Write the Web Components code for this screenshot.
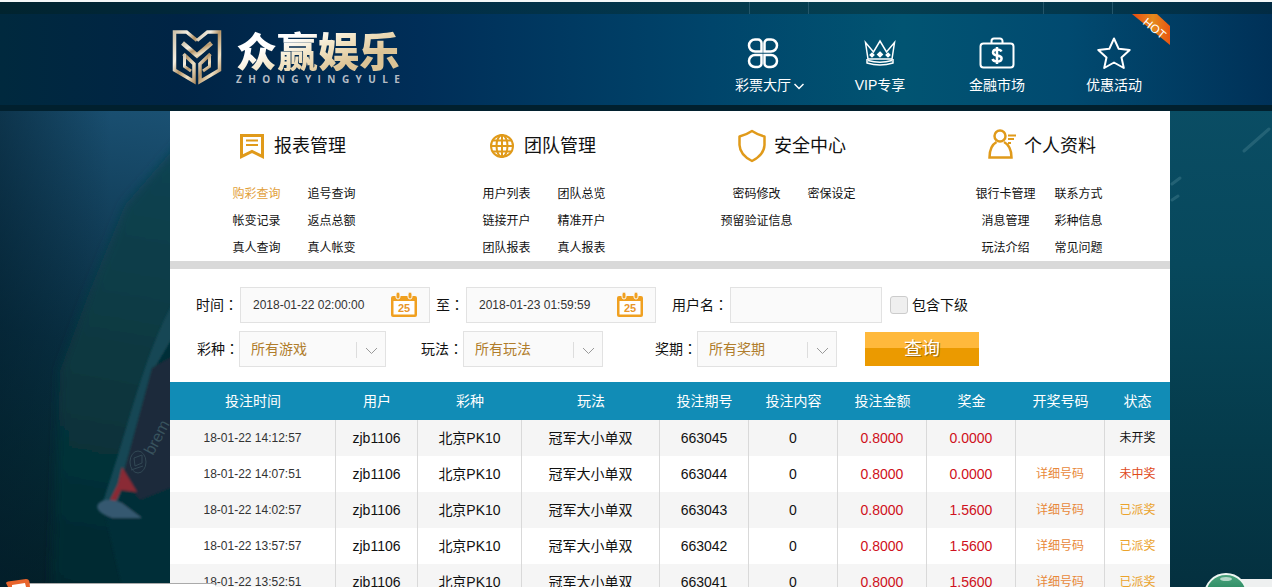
<!DOCTYPE html>
<html lang="zh-CN">
<head>
<meta charset="utf-8">
<meta name="viewport" content="width=device-width, initial-scale=1">
<title>众赢娱乐 - 购彩查询</title>
<style>
  html, body { margin: 0; height: 100%; }
  body {
    overflow: hidden;
    background: #04303d;
    color: #111;
    font: 14px/20px "Liberation Sans", "Noto Sans CJK SC", sans-serif;
  }
</style>
</head>
<body>
<lottery-app></lottery-app>

<script>
const define = (name, html, setup) => {
  const template = document.createElement('template');
  template.innerHTML = html;
  customElements.define(name, class extends HTMLElement {
    constructor() {
      super();
      this.attachShadow({ mode: 'open' }).append(template.content.cloneNode(true));
    }
    connectedCallback() { if (setup) setup(this, this.shadowRoot); }
  });
};

/* Stadium photograph behind the page, redrawn as vector shapes */
define('page-backdrop', `
<style>
  :host { position: absolute; inset: 0; overflow: hidden; display: flex; justify-content: space-between;
          background: #04303d; }
  svg { display: block; flex: none; }
  .right { flex: 1; }
</style>
<svg width="300" height="587" viewBox="0 0 300 587" aria-hidden="true">
  <defs>
    <linearGradient id="base" gradientUnits="userSpaceOnUse" x1="150" y1="110" x2="50" y2="587">
      <stop offset="0" stop-color="#1a5072"/><stop offset=".25" stop-color="#123f5a"/>
      <stop offset=".5" stop-color="#093043"/><stop offset=".75" stop-color="#052a34"/><stop offset="1" stop-color="#042028"/>
    </linearGradient>
    <linearGradient id="shade" gradientUnits="userSpaceOnUse" x1="0" y1="0" x2="110" y2="0">
      <stop offset="0" stop-color="#021d2c" stop-opacity=".5"/><stop offset="1" stop-color="#021d2c" stop-opacity="0"/>
    </linearGradient>
    <linearGradient id="cloth" gradientUnits="userSpaceOnUse" x1="160" y1="130" x2="80" y2="587">
      <stop offset="0" stop-color="#0b4454"/><stop offset=".5" stop-color="#083840"/><stop offset="1" stop-color="#04282f"/>
    </linearGradient>
    <filter id="soft"><feGaussianBlur stdDeviation="5"/></filter>
    <filter id="edge"><feGaussianBlur stdDeviation="1"/></filter>
  </defs>
  <rect width="300" height="587" fill="url(#base)"/>
  <rect width="300" height="587" fill="url(#shade)"/>
  <path d="M190 130 L125 205 L90 290 L60 370 L50 620 L200 620Z" fill="url(#cloth)" filter="url(#soft)"/>
  <g filter="url(#edge)">
    <path d="M180 320 L160 345 L112 480 L104 510 L130 620 H190Z" fill="#062e38"/>
    <path d="M180 290 C150 340 135 400 118 455 L102 505 L117 505 L138 430 L152 372 L180 325Z" fill="#134754"/>
    <path d="M180 352 L152 368 Q138 420 122 478 L140 500 L180 484Z" fill="#1b2b3a"/>
    <path d="M122 467 L137 492 L121 490 L113 507 L110 500 L118 484Z" fill="#8a2935"/>
    <path d="M98 504 Q105 496 122 503 L142 518 H112 Q94 512 98 504Z" fill="#35586f"/>
  </g>
  <g fill="none" stroke="#3c5660" stroke-width="1" opacity=".7">
    <ellipse cx="138" cy="462" rx="8" ry="11"/><path d="M134 458l8-3v8l-7 3zM131 470l12-4"/>
  </g>
  <g fill="#38525d" font-family="Liberation Sans" font-size="16" transform="translate(153 456) rotate(-62)"><text>brem</text></g>
</svg>
<div class="right"></div>
<svg style="background:linear-gradient(#0a4d64 18%, #07485c 45%, #053b4b 75%, #04303f)" width="180" height="587" viewBox="0 0 180 587" aria-hidden="true">
  <g stroke="#4a8493" stroke-width="3" opacity=".4" stroke-linecap="round"><path d="M152 151l25-22M80 184l8-6M80 200l6-4"/></g>
</svg>`);

define('brand-logo', `
<style>
  :host { display: block; }
  a { display: flex; gap: 14px; text-decoration: none; }
  svg { flex: none; }
  .words { display: flex; flex-direction: column; gap: 2px; width: 164px; }
  .name { font: 900 41px/44px "Noto Sans CJK SC", sans-serif; color: transparent; white-space: nowrap;
    background: linear-gradient(160deg, #fff 30%, #f3e6c8 50%, #dcc496 75%); -webkit-background-clip: text; background-clip: text; }
  .latin { display: flex; justify-content: space-between; color: #b5bcc4; font: 700 10px/12px "Open Sans", sans-serif; }
</style>
<a href="#home">
  <svg width="50" height="60" viewBox="0 0 50 60" aria-hidden="true">
    <defs><linearGradient id="g" x1="0" y1="0" x2="1" y2="1">
      <stop offset="0" stop-color="#cfc3ac"/><stop offset=".3" stop-color="#f5efe2"/><stop offset=".5" stop-color="#b59467"/><stop offset=".75" stop-color="#efe2c6"/><stop offset="1" stop-color="#a88355"/>
    </linearGradient></defs>
    <g fill="none" stroke="url(#g)" stroke-width="3.500">
      <path d="M25 13.500 L14.500 5 H2.500 V43 L22 54.500 V37 L11.500 27"/>
      <path d="M25 13.500 L35.500 5 H47.500 V43 L28 54.500 V37 L38.500 27"/>
      <path d="M10.500 16 L25 28.500 L39.500 16" stroke-width="4.500"/>
      <path d="M12.500 27 V39.500 L19 44 M37.500 27 V39.500 L31 44" stroke-width="3"/>
    </g>
  </svg>
  <span class="words"><span class="name">众赢娱乐</span><span class="latin"></span></span>
</a>`, (host, root) => {
  const latin = root.querySelector('.latin');
  if (!latin.childElementCount) for (const letter of 'ZHONGYINGYULE') {
    const span = document.createElement('span');
    span.textContent = letter;
    latin.append(span);
  }
});

define('nav-item', `
<style>
  :host { display: block; flex: 1; }
  a { display: flex; flex-direction: column; align-items: center; gap: 4px; color: #fff; text-decoration: none; }
  .icon { display: grid; place-items: center; height: 36px; }
  .label { position: relative; white-space: nowrap; }
</style>
<a href="#"><span class="icon"><slot name="icon"></slot></span><span class="label"><slot></slot></span></a>`,
(host, root) => { root.querySelector('a').href = host.getAttribute('href'); });

define('site-header', `
<style>
  :host { display: block; border-top: 2px solid #f4f8f8; position: relative; }
  .strip { display: flex; height: 12px; padding-right: 103px; justify-content: flex-end;
    background: linear-gradient(90deg, #01242f, #012a42 25%, #023349 45%, #053f50 68%, #03374c 85%, #022b43); }
  .strip i { box-sizing: border-box; border-left: 1px solid #24566a; }
  .main { box-sizing: border-box; height: 91px; padding: 13px 103px 0 172px; display: flex; justify-content: space-between;
    background: linear-gradient(90deg, #00293e, #002445 14%, #002e58 33%, #00456b 56%, #015472 71%, #014a70 84%, #003158); }
  .edge { height: 6px; background: #01202e; }
  nav { display: flex; gap: 7px; width: 461px; padding-top: 8px; }
  svg { display: block; fill: none; stroke: #fff; stroke-width: 2; }
  .arrow { position: absolute; left: calc(100% + 3px); top: 8px; stroke-width: 1.500; }
  .hot { position: absolute; top: 12px; right: 102px; width: 38px; height: 32px; stroke: none; }
</style>
<div class="strip"><i style="width:59px"></i><i style="width:235px"></i><i style="width:69px"></i><i style="width:57px"></i></div>
<div class="main">
  <brand-logo></brand-logo>
  <nav aria-label="主导航">
    <nav-item href="#hall">
      <svg slot="icon" width="32" height="32" viewBox="0 0 32 32" style="stroke-width:2.500"><path d="M8 2.500h3a3.500 3.500 0 0 1 3.500 3.500v8.500H8a6 6 0 0 1 0-12zM24 2.500h-3a3.500 3.500 0 0 0-3.500 3.500v8.500H24a6 6 0 0 0 0-12zM8 30h3a3.500 3.500 0 0 0 3.500-3.500V18H8a6 6 0 0 0 0 12zM24 30h-3a3.500 3.500 0 0 1-3.500-3.500V18H24a6 6 0 0 1 0 12z"/></svg>
      彩票大厅<svg class="arrow" width="10" height="7" viewBox="0 0 10 7" aria-hidden="true"><path d="M.5 1 5 5.500 9.500 1"/></svg>
    </nav-item>
    <nav-item href="#vip">
      <svg slot="icon" width="32" height="28" viewBox="0 0 32 28" style="stroke-width:1.500"><path d="M1.500 3.500 4 20H28L30.500 3.500 22.500 13 16 2 9.500 13zM3 20v4q13 4 26 0v-4M4 21.500q12 3.500 24 0"/><g stroke-width="1.200"><path d="M8 14l2 2-2 2-2-2zM16 13l2.500 2.500L16 18l-2.500-2.500zM24 14l2 2-2 2-2-2z" fill="#fff"/></g></svg>
      VIP专享
    </nav-item>
    <nav-item href="#finance">
      <svg slot="icon" width="36" height="32" viewBox="0 0 36 32"><rect x="1.500" y="6.500" width="33" height="24" rx="3"/><path d="M12.500 6V4a2.500 2.500 0 0 1 2.500-2.500h6A2.500 2.500 0 0 1 23.500 4v2"/><path d="M22.500 14.500q-1-2-4.500-2-4 0-4 3 0 2.500 4.300 3t4.300 3q0 3-4.600 3-3.500 0-4.500-2.500M18 10v17" stroke-width="2.500"/></svg>
      金融市场
    </nav-item>
    <nav-item href="#promo">
      <svg slot="icon" width="34" height="32" viewBox="0 0 34 32"><path stroke-linejoin="round" d="M17 1.500l4.700 10.300 11 1.200-8.200 7.500 2.300 10.500L17 25.500 7.200 31l2.300-10.500L1.300 13l11-1.200z"/></svg>
      优惠活动
    </nav-item>
  </nav>
</div>
<div class="edge"></div>
<svg class="hot" viewBox="0 0 38 32" role="img" aria-label="HOT">
  <defs><linearGradient id="h"><stop offset="0" stop-color="#ea4a10"/><stop offset=".55" stop-color="#e58a1c"/><stop offset="1" stop-color="#ea5512"/></linearGradient></defs>
  <path d="M0 0H25L38 12V31Z" fill="url(#h)"/>
  <text x="11" y="9" transform="rotate(40 10 8)" fill="#fff" font-family="Liberation Sans" font-size="12">HOT</text>
</svg>`);

define('menu-group', `
<style>
  :host { display: block; --cell: 75px; }
  h2 { display: grid; grid-template-columns: 36px auto; width: 108px; height: 36px; margin: 0; padding-left: 68px;
       align-items: center; font-weight: 400; font-size: 18px; line-height: 24px; color: #111; white-space: nowrap; }
  .icon { display: grid; width: 28px; place-items: center; }
  ul { display: grid; grid-template-columns: var(--cell) var(--cell); margin: 0; padding: 17px 0 0 49px; list-style: none; }
  li { display: flex; justify-content: center; height: 27px; line-height: 27px; font-size: 12px; white-space: nowrap; }
  a { color: #111; text-decoration: none; }
  a[aria-current] { color: #e2a03a; }
</style>
<h2><span class="icon"><slot name="icon"></slot></span><span class="title"></span></h2><ul></ul>`,
(host, root) => {
  root.querySelector('.title').textContent = host.getAttribute('heading');
  const list = root.querySelector('ul');
  list.replaceChildren(...host.getAttribute('links').split(' ').map(text => {
    const li = document.createElement('li'), a = document.createElement('a');
    a.href = '#' + text;
    a.textContent = text;
    if (text === host.getAttribute('current')) a.setAttribute('aria-current', 'page');
    li.append(a);
    return li;
  }));
});

define('account-menu', `
<style>
  :host { display: grid; grid-template-columns: repeat(4, 1fr); box-sizing: border-box; height: 158px; padding-top: 17px;
          border-bottom: 8px solid #d9d9d9; }
  svg { display: block; fill: none; stroke: #e09a1a; stroke-width: 2.500; }
  .narrow { --cell: 73px; }
</style>
<menu-group heading="报表管理" current="购彩查询" links="购彩查询 追号查询 帐变记录 返点总额 真人查询 真人帐变">
  <svg slot="icon" width="24" height="26" viewBox="0 0 24 26"><path stroke-width="3" d="M1.500 2.500h21V23.500L12 18.500 1.500 23.500z"/><path d="M6 7.500h12M6 12h12" stroke-width="2"/></svg>
</menu-group>
<menu-group heading="团队管理" links="用户列表 团队总览 链接开户 精准开户 团队报表 真人报表">
  <svg slot="icon" width="26" height="26" viewBox="0 0 26 26" style="stroke-width:2"><circle cx="13" cy="13" r="11"/><ellipse cx="13" cy="13" rx="5.500" ry="11"/><path d="M13 2v22M2 13h22M4 7.500h18M4 18.500h18"/></svg>
</menu-group>
<menu-group heading="安全中心" links="密码修改 密保设定 预留验证信息">
  <svg slot="icon" width="28" height="34" viewBox="0 0 28 34"><path stroke-linejoin="round" d="M14 2Q20 6 26.500 7.500V16Q26 26 14 32 2 26 1.500 16V7.500Q8 6 14 2z"/></svg>
</menu-group>
<menu-group class="narrow" heading="个人资料" links="银行卡管理 联系方式 消息管理 彩种信息 玩法介绍 常见问题">
  <svg slot="icon" width="28" height="30" viewBox="0 0 28 30" style="margin-bottom:4px"><circle cx="12" cy="7" r="5.500"/><path d="M8.500 13Q1.500 17 1.500 28.500h22Q23.500 17 16 13"/><path d="M20 6.500h8M20 10h6M20 14h3" stroke-width="2"/></svg>
</menu-group>`);

const fieldStyle = `
  :host { display: flex; align-items: center; gap: 2px; --field-width: 190px; }
  label { padding-bottom: 2px; white-space: nowrap; }
  .colon { font-family: "Noto Sans CJK TC", sans-serif; }
  .box { position: relative; display: block; width: var(--field-width); }
  input, select { box-sizing: border-box; display: block; width: 100%; height: 36px; margin: 0; border: 1px solid #e2e2e2;
    border-radius: 0; background: #fafafa; padding: 0 12px; outline-color: #e8a020; }
  svg { position: absolute; pointer-events: none; }`;

define('text-field', `
<style>${fieldStyle}
  input { color: #333; font: 12px/18px "Liberation Sans", sans-serif; }
  svg { right: 13px; top: 4px; }
  :host(:not([calendar])) svg { display: none; }
</style>
<label for="control"><span class="text"></span><span class="colon" lang="zh-TW">：</span></label>
<span class="box"><input id="control" type="text" autocomplete="off">
<svg width="26" height="28" viewBox="0 0 26 28" aria-hidden="true"><path fill="#f0a020" d="M2 5h22a2 2 0 0 1 2 2v17a2 2 0 0 1-2 2H2a2 2 0 0 1-2-2V7a2 2 0 0 1 2-2z"/><path fill="#fff" d="M2.500 10h21v13.500h-21z"/><rect x="5" y="1" width="4" height="7" rx="2" fill="#f0a020" stroke="#fafafa"/><rect x="17" y="1" width="4" height="7" rx="2" fill="#f0a020" stroke="#fafafa"/><text x="13" y="20.500" text-anchor="middle" fill="#e8962a" font-family="Liberation Sans" font-weight="700" font-size="11">25</text></svg></span>`,
(host, root) => {
  root.querySelector('.text').textContent = host.getAttribute('label');
  root.querySelector('input').value = host.getAttribute('value') || '';
});

define('select-field', `
<style>${fieldStyle}
  :host { gap: 0; --field-width: 140px; }
  select { appearance: none; padding: 0 34px 0 11px; color: #b07d2c; font: inherit; }
  svg { right: 6px; top: 10px; }
</style>
<label for="control"><span class="text"></span><span class="colon" lang="zh-TW">：</span></label>
<span class="box"><select id="control"></select>
<svg width="24" height="18" viewBox="0 0 24 18" fill="none" aria-hidden="true"><path d="M.5 1v16" stroke="#ddd"/><path d="M10 7l5.500 5.500L21 7" stroke="#999"/></svg></span>`,
(host, root) => {
  root.querySelector('.text').textContent = host.getAttribute('label');
  root.querySelector('select').replaceChildren(new Option(host.getAttribute('value')));
});

define('query-form', `
<style>
  :host { display: block; }
  form { display: grid; row-gap: 8px; margin: 0; padding: 18px 20px 15px 26px; }
  .row { display: flex; align-items: center; }
  .row + .row { padding-left: 1px; }
  .check { display: flex; align-items: center; gap: 4px; margin-left: 8px; white-space: nowrap; }
  .check input { appearance: none; box-sizing: border-box; width: 18px; height: 18px; margin: 0; border: 1px solid #ccc;
    border-radius: 3px; background: #efefef; }
  .check input:checked { background: #e8a020; }
  button { width: 114px; height: 34px; margin-left: 28px; padding: 0; border: 0; color: #fff; cursor: pointer;
    font: 18px/34px "Liberation Sans", "Noto Sans CJK SC", sans-serif; text-shadow: 1px 1px 0 #a8700a;
    background: linear-gradient(#ffb93c 0 16px, #eb9a00 16px); }
</style>
<form onsubmit="return false">
  <div class="row">
    <text-field calendar label="时间" value="2018-01-22 02:00:00"></text-field>
    <text-field calendar label="至" value="2018-01-23 01:59:59" style="margin-left:6px"></text-field>
    <text-field label="用户名" style="margin-left:16px; --field-width:152px"></text-field>
    <label class="check"><input type="checkbox">包含下级</label>
  </div>
  <div class="row">
    <select-field label="彩种" value="所有游戏" style="--field-width:147px"></select-field>
    <select-field label="玩法" value="所有玩法" style="margin-left:35px"></select-field>
    <select-field label="奖期" value="所有奖期" style="margin-left:52px"></select-field>
    <button type="submit">查询</button>
  </div>
</form>`);

define('bet-table', `
<style>
  :host { display: block; }
  table { width: 100%; table-layout: fixed; border-collapse: separate; border-spacing: 0; text-align: center; background: #fff; }
  th { height: 38px; padding: 0; color: #fff; background: #118cb6; font-weight: 400; }
  td { box-sizing: border-box; height: 36px; padding: 0; border-right: 1px solid #d9d9d9; white-space: nowrap; }
  td:last-child { border-right: 0; }
  tbody tr:nth-child(odd) { background: #f5f5f5; }
  .time, .link, .status { font-size: 12px; }
  .time { color: #333; }
  .money { color: #cf1020; }
  a { color: #e8883a; text-decoration: none; }
  .lost { color: #e04a1a; }
  .paid { color: #eba32c; }
</style>
<table>
  <colgroup><col style="width:16.6%"><col style="width:8.2%"><col style="width:10.4%"><col style="width:13.8%"><col style="width:8.9%"><col style="width:8.9%"><col style="width:8.9%"><col style="width:8.9%"><col style="width:8.9%"><col></colgroup>
  <thead><tr><th>投注时间</th><th>用户</th><th>彩种</th><th>玩法</th><th>投注期号</th><th>投注内容</th><th>投注金额</th><th>奖金</th><th>开奖号码</th><th>状态</th></tr></thead>
  <tbody></tbody>
</table>`, (host, root) => {
  const bets = [
    ['14:12:57', '663045', '0.0000', '', '未开奖', 'open'],
    ['14:07:51', '663044', '0.0000', '详细号码', '未中奖', 'lost'],
    ['14:02:57', '663043', '1.5600', '详细号码', '已派奖', 'paid'],
    ['13:57:57', '663042', '1.5600', '详细号码', '已派奖', 'paid'],
    ['13:52:51', '663041', '1.5600', '详细号码', '已派奖', 'paid']
  ];
  root.querySelector('tbody').innerHTML = bets.map(([time, issue, prize, detail, status, state]) =>
    `<tr><td class="time">18-01-22 ${time}</td><td>zjb1106</td><td>北京PK10</td><td>冠军大小单双</td><td>${issue}</td><td>0</td>
     <td class="money">0.8000</td><td class="money">${prize}</td><td class="link">${detail ? `<a href="#${issue}">${detail}</a>` : ''}</td>
     <td class="status ${state}">${status}</td></tr>`).join('');
});

/* Floating desktop widgets that peek in at the bottom corners */
define('corner-widgets', `
<style>
  :host { position: absolute; inset: auto 0 0 0; height: 15px; overflow: hidden; pointer-events: none; }
  .tip { position: absolute; left: 28px; bottom: 0; box-sizing: border-box; width: 188px; height: 4px; background: #fff; border-top: 1px solid #aaa; border-radius: 0 6px 0 0; }
  .bar { position: absolute; right: 0; bottom: 0; width: 40px; height: 8px; background: #eef0f0; }
  svg { position: absolute; bottom: 0; }
</style>
<div class="tip"></div><div class="bar"></div>
<svg style="left:6px" width="26" height="8" viewBox="0 0 26 8"><path d="M0 4Q0 3 2 2.500L20 0Q23 0 23.500 3L24 8H2z" fill="#e8642c"/><path d="M6 8V6l13-2 1 4z" fill="#fff"/></svg>
<svg style="right:24px" width="44" height="15" viewBox="0 0 44 15"><defs><linearGradient id="b" x2="0" y2="1"><stop stop-color="#4da57f"/><stop offset=".4" stop-color="#2c8a62"/><stop offset="1" stop-color="#1b6b4a"/></linearGradient></defs><circle cx="22" cy="23" r="21" fill="url(#b)" stroke="#eef6f2" stroke-width="2"/><ellipse cx="22" cy="7" rx="6" ry="2" fill="#fff" opacity=".6"/></svg>`);

define('lottery-app', `
<style>
  :host { display: block; position: relative; height: 100vh; overflow: hidden; }
  .page { position: relative; }
  main { margin: 0 102px 0 170px; background: #fff; }
</style>
<page-backdrop></page-backdrop>
<div class="page">
  <site-header></site-header>
  <main><account-menu></account-menu><query-form></query-form><bet-table></bet-table></main>
</div>
<corner-widgets></corner-widgets>`);
</script>
</body>
</html>
